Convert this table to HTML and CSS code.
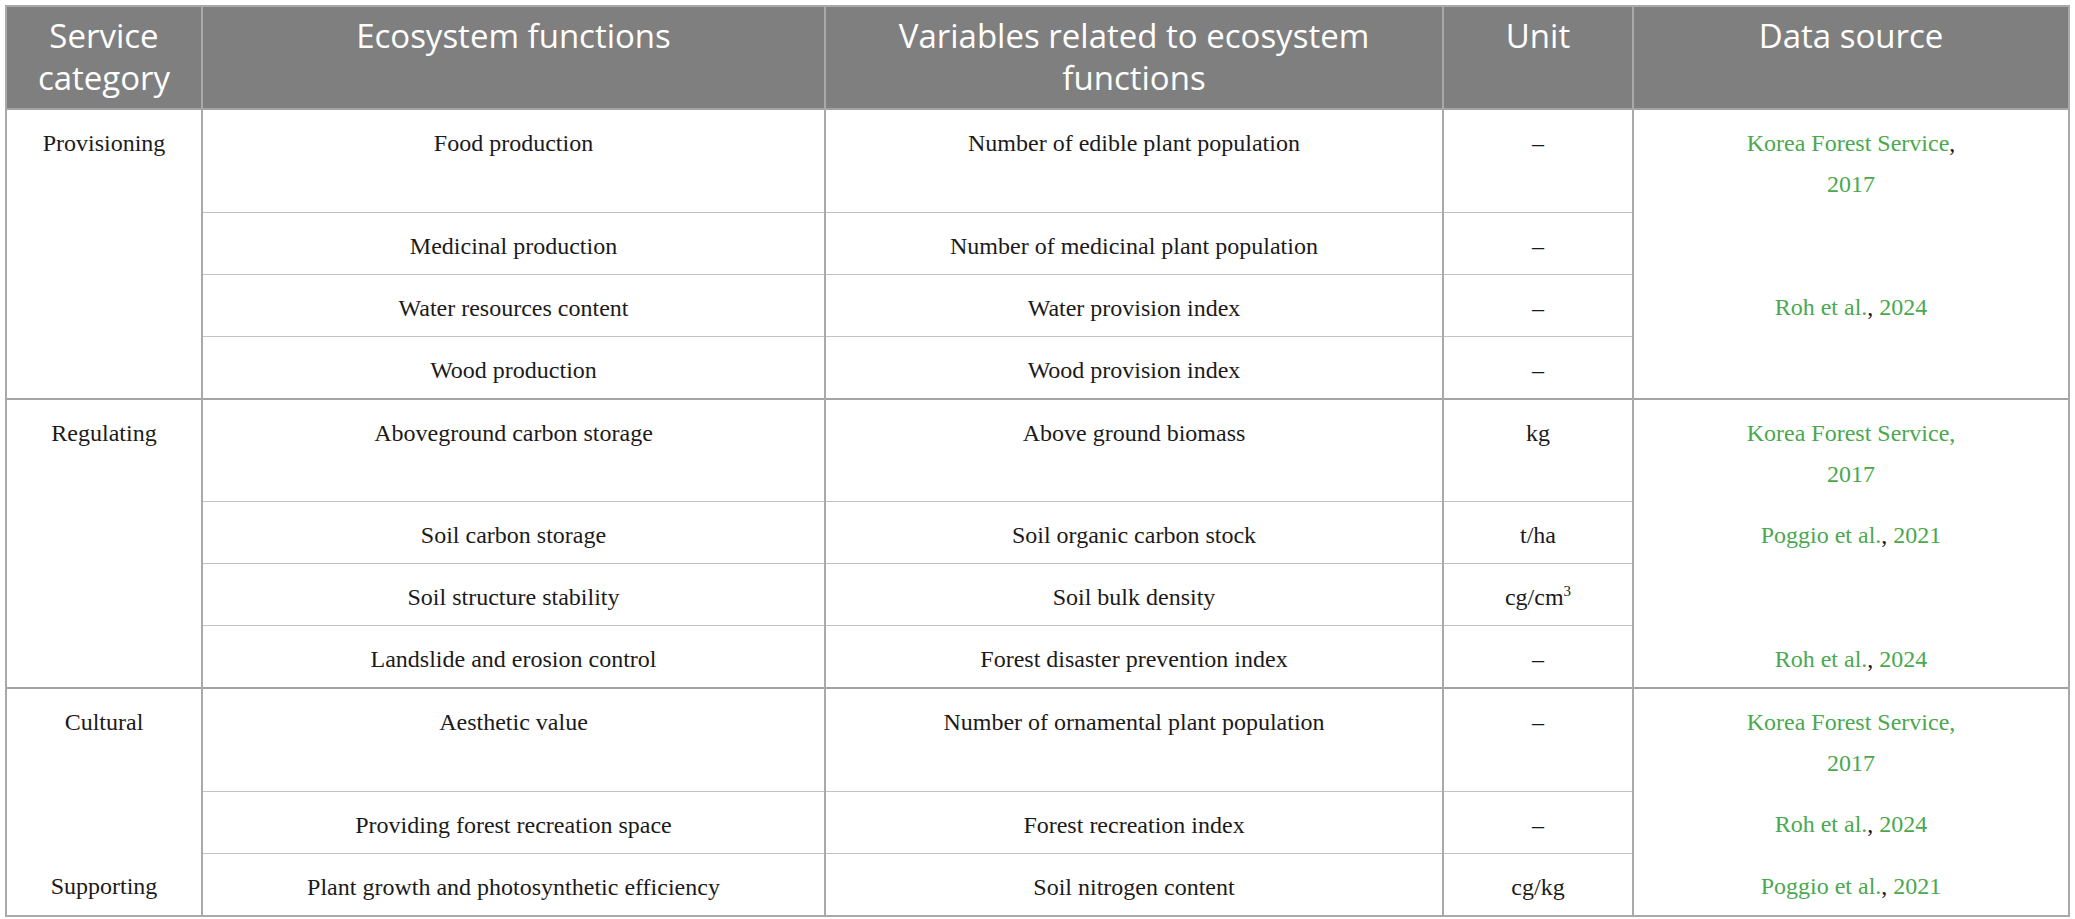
FILE: index.html
```html
<!DOCTYPE html>
<html lang="en">
<head>
  <meta charset="UTF-8" />
  <title>Ecosystem services table</title>
  <meta name="viewport" content="width=device-width, initial-scale=1.0" />
  <link rel="stylesheet" href="styles.css">
</head>
<body>
  <table class="services">
    <colgroup>
      <col class="c-cat">
      <col class="c-func">
      <col class="c-var">
      <col class="c-unit">
      <col class="c-src">
    </colgroup>
    <thead>
      <tr>
        <th>Service category</th>
        <th>Ecosystem functions</th>
        <th>Variables related to ecosystem functions</th>
        <th>Unit</th>
        <th>Data source</th>
      </tr>
    </thead>
    <tbody>
      <tr class="group">
        <td class="cat" rowspan="4">Provisioning</td>
        <td>Food production</td>
        <td>Number of edible plant population</td>
        <td>–</td>
        <td class="src"><span class="ref">Korea Forest Service</span>,<br><span class="ref">2017</span></td>
      </tr>
      <tr>
        <td>Medicinal production</td>
        <td>Number of medicinal plant population</td>
        <td>–</td>
        <td class="src"></td>
      </tr>
      <tr>
        <td>Water resources content</td>
        <td>Water provision index</td>
        <td>–</td>
        <td class="src"><span class="ref">Roh et al.</span>, <span class="ref">2024</span></td>
      </tr>
      <tr>
        <td>Wood production</td>
        <td>Wood provision index</td>
        <td>–</td>
        <td class="src"></td>
      </tr>

      <tr class="group">
        <td class="cat" rowspan="4">Regulating</td>
        <td>Aboveground carbon storage</td>
        <td>Above ground biomass</td>
        <td>kg</td>
        <td class="src"><span class="ref">Korea Forest Service,<br>2017</span></td>
      </tr>
      <tr>
        <td>Soil carbon storage</td>
        <td>Soil organic carbon stock</td>
        <td>t/ha</td>
        <td class="src"><span class="ref">Poggio et al.</span>, <span class="ref">2021</span></td>
      </tr>
      <tr>
        <td>Soil structure stability</td>
        <td>Soil bulk density</td>
        <td>cg/cm<sup>3</sup></td>
        <td class="src"></td>
      </tr>
      <tr>
        <td>Landslide and erosion control</td>
        <td>Forest disaster prevention index</td>
        <td>–</td>
        <td class="src"><span class="ref">Roh et al.</span>, <span class="ref">2024</span></td>
      </tr>

      <tr class="group">
        <td class="cat" rowspan="2">Cultural</td>
        <td>Aesthetic value</td>
        <td>Number of ornamental plant population</td>
        <td>–</td>
        <td class="src"><span class="ref">Korea Forest Service,<br>2017</span></td>
      </tr>
      <tr>
        <td>Providing forest recreation space</td>
        <td>Forest recreation index</td>
        <td>–</td>
        <td class="src"><span class="ref">Roh et al.</span>, <span class="ref">2024</span></td>
      </tr>
      <tr>
        <td class="cat">Supporting</td>
        <td>Plant growth and photosynthetic efficiency</td>
        <td>Soil nitrogen content</td>
        <td>cg/kg</td>
        <td class="src"><span class="ref">Poggio et al.</span>, <span class="ref">2021</span></td>
      </tr>
    </tbody>
  </table>
</body>
</html>
```

FILE: styles.css
```css
body {
  margin: 5px;
  background: #fff;
  font-family: "Liberation Serif", "Times New Roman", serif;
  color: #1c1a1a;
}
.services {
  width: 2063px;
  table-layout: fixed;
  border-collapse: collapse;
  border: 2px solid #a9a9a9;
}
.c-cat { width: 196px; }
.c-func { width: 623px; }
.c-var { width: 618px; }
.c-unit { width: 190px; }
.c-src { width: 436px; }

th {
  background: #7f7f7f;
  color: #fff;
  font-family: "Open Sans", "Noto Sans", sans-serif;
  font-weight: 400;
  font-size: 33px;
  line-height: 42px;
  padding: 8px 10px 9px;
  vertical-align: top;
  text-align: center;
  border-left: 2px solid #a9a9a9;
  border-right: 2px solid #a9a9a9;
}
td {
  font-size: 24px;
  line-height: 41px;
  padding: 13px 12px 7px;
  text-align: center;
  vertical-align: top;
  border-left: 2px solid #a9a9a9;
  border-right: 2px solid #a9a9a9;
  border-top: 1px solid #c2c2c2;
}
.cat,
.src {
  border-top: none;
}
.group td {
  border-top: 2px solid #a3a3a3;
}
.ref {
  color: #4aa84f;
}
sup {
  font-size: 15px;
  line-height: 0;
  vertical-align: 9px;
}
```
